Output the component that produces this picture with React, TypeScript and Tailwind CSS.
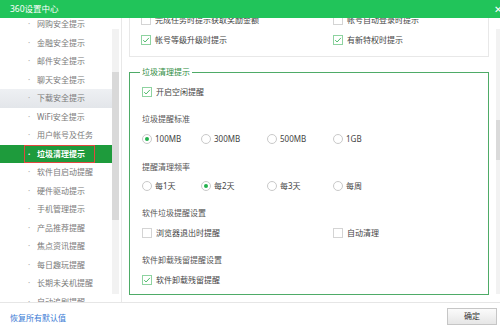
import React from "react";

const menu = [
  "网购安全提示",
  "金融安全提示",
  "邮件安全提示",
  "聊天安全提示",
  "下载安全提示",
  "WiFi安全提示",
  "用户帐号及任务",
  "垃圾清理提示",
  "软件自启动提醒",
  "硬件驱动提示",
  "手机管理提示",
  "产品推荐提醒",
  "焦点资讯提醒",
  "每日趣玩提醒",
  "长期未关机提醒",
  "自动追剧提醒",
];

function Checkbox({ checked, label }: { checked?: boolean; label: string }) {
  return (
    <label className="flex items-center gap-[4px]">
      <span
        className={`flex h-[10px] w-[10px] items-center justify-center border bg-white ${
          checked ? "border-[#8ed3a0]" : "border-[#d4d4d4]"
        }`}
      >
        {checked && (
          <svg width="8" height="8" viewBox="0 0 8 8">
            <path d="M1.2 4.1 L3.1 6 L6.9 1.9" fill="none" stroke="#3db35b" strokeWidth="0.9" />
          </svg>
        )}
      </span>
      <span className="text-[#444]">{label}</span>
    </label>
  );
}

function Radio({ checked, label }: { checked?: boolean; label: string }) {
  return (
    <label className="flex items-center gap-[3px]">
      <span className="flex h-[10px] w-[10px] items-center justify-center rounded-full border border-[#c9c9c9] bg-white">
        {checked && <span className="h-[4px] w-[4px] rounded-full bg-[#23b14d]" />}
      </span>
      <span className="text-[#444]">{label}</span>
    </label>
  );
}

export default function App() {
  return (
    <div
      className="flex h-[329px] w-[500px] flex-col overflow-hidden bg-white text-[8px] leading-none"
      style={{ fontFamily: '"Noto Sans", "Noto Sans CJK SC", sans-serif' }}
    >
      {/* Header */}
      <div className="flex h-[18px] shrink-0 items-center justify-between bg-[#21c45a] pl-[10px] text-white">
        <span className="text-[8.5px]">360设置中心</span>
        <span className="-mr-[2px] text-[10px]">✕</span>
      </div>

      {/* Main */}
      <div className="flex h-[285px] shrink-0 border-b border-[#e6e6e6]">
        {/* Sidebar */}
        <div className="flex w-[122px] shrink-0 border-r border-[#e8e8e8]">
          <div className="w-[112px] overflow-hidden">
            <div className="-mt-[3px]">
              {menu.map((item, i) => {
                if (i === 7) {
                  return (
                    <div key={item} className="flex h-[18.5px] items-center bg-[#1e9b3c] pl-[24px]">
                      <div className="flex h-[18px] w-[71px] items-center border border-[#e0483f] pl-[3px] font-bold text-white">
                        <span className="w-[9px]">·</span>
                        <span>{item}</span>
                      </div>
                    </div>
                  );
                }
                return (
                  <div
                    key={item}
                    className={`flex h-[18.5px] items-center pl-[28px] text-[#7a7a7a] ${
                      i === 4 ? "bg-gradient-to-b from-[#eef0f3] to-[#e3e6ea]" : ""
                    }`}
                  >
                    <span className="w-[9px] text-[#aaa]">·</span>
                    <span>{item}</span>
                  </div>
                );
              })}
            </div>
          </div>
          <div className="flex w-[7px] flex-col pb-[8px] pt-[11px]">
            <div className="flex flex-1 flex-col bg-[#f2f2f2] pt-[43px]">
              <div className="h-[148px] bg-[#d9d9d9]" />
            </div>
          </div>
        </div>

        {/* Content */}
        <div className="flex flex-1">
          <div className="flex-1 overflow-hidden px-[7px]">
            <div className="-mt-[9px] border border-[#e8e8e8] pb-[6px] pl-[11px]">
              <div className="flex h-[20px] items-center">
                <div className="w-[192px]">
                  <Checkbox label="完成任务时提示获取奖励金额" />
                </div>
                <Checkbox label="帐号自动登录时提示" />
              </div>
              <div className="flex h-[20px] items-center">
                <div className="w-[192px]">
                  <Checkbox checked label="帐号等级升级时提示" />
                </div>
                <Checkbox checked label="有新特权时提示" />
              </div>
            </div>

            <fieldset className="mt-[9px] border border-[#4eab67] px-[12px] pb-[5px]">
              <legend className="-ml-[2px] h-[12px] px-[2px] leading-[12px] text-[#2e8b3e]">垃圾清理提示</legend>
              <div className="flex h-[20px] items-center pt-[0px]" style={{ marginTop: 4 }}>
                <Checkbox checked label="开启空闲提醒" />
              </div>
              <div className="mt-[7px] flex h-[20px] items-center text-[#555]">垃圾提醒标准</div>
              <div className="flex h-[20px] items-center">
                <div className="w-[59px]"><Radio checked label="100MB" /></div>
                <div className="w-[66px]"><Radio label="300MB" /></div>
                <div className="w-[66px]"><Radio label="500MB" /></div>
                <Radio label="1GB" />
              </div>
              <div className="mt-[8px] flex h-[19px] items-center text-[#555]">提醒清理频率</div>
              <div className="flex h-[20px] items-center">
                <div className="w-[59px]"><Radio label="每1天" /></div>
                <div className="w-[66px]"><Radio checked label="每2天" /></div>
                <div className="w-[66px]"><Radio label="每3天" /></div>
                <Radio label="每周" />
              </div>
              <div className="mt-[7px] flex h-[20px] items-center text-[#555]">软件垃圾提醒设置</div>
              <div className="flex h-[19px] items-center">
                <div className="w-[191px]">
                  <Checkbox label="浏览器退出时提醒" />
                </div>
                <Checkbox label="自动清理" />
              </div>
              <div className="mt-[8px] flex h-[20px] items-center text-[#555]">软件卸载残留提醒设置</div>
              <div className="flex h-[19px] items-center">
                <Checkbox checked label="软件卸载残留提醒" />
              </div>
            </fieldset>
          </div>
          <div className="flex w-[4px] flex-col pb-[8px] pt-[11px]">
            <div className="flex flex-1 flex-col bg-[#f2f2f2] pt-[91px]">
              <div className="h-[40px] bg-[#dadada]" />
            </div>
          </div>
        </div>
      </div>

      {/* Footer */}
      <div className="flex flex-1 items-center justify-between pl-[10px] pr-[3px]">
        <span className="mt-[4px] text-[#3a7bd5]">恢复所有默认值</span>
        <button className="h-[17px] w-[50px] border border-[#c6c6c6] bg-gradient-to-b from-[#fbfbfb] to-[#e6e6e6] text-[#333]">
          确定
        </button>
      </div>
    </div>
  );
}
